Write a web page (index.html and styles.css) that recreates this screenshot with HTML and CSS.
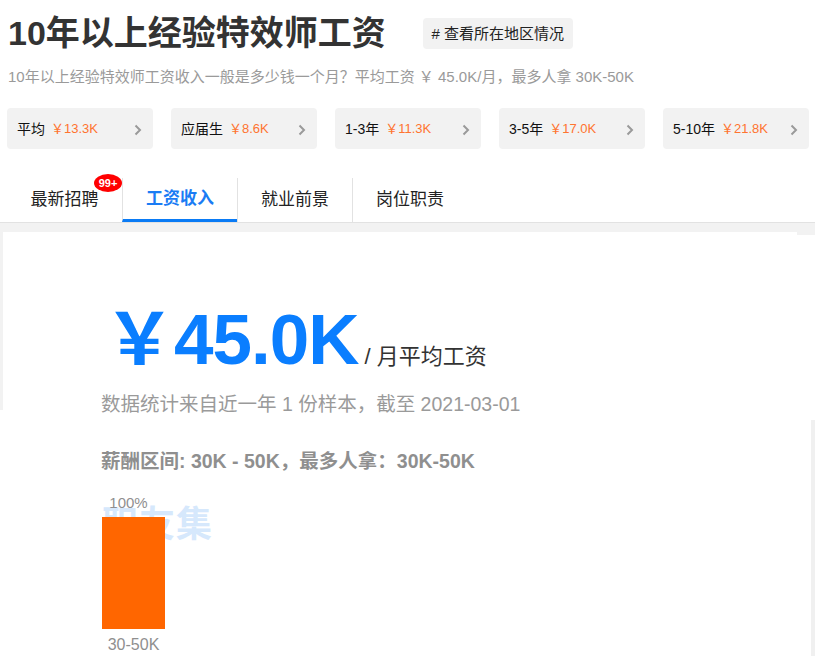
FILE: index.html
```html
<!DOCTYPE html>
<html lang="zh">
<head>
<meta charset="utf-8">
<title>10年以上经验特效师工资</title>
<link rel="stylesheet" href="styles.css">
</head>
<body>
<header class="head">
  <div class="title-row">
    <h1 class="title">10年以上经验特效师工资</h1>
    <a class="tag"># 查看所在地区情况</a>
  </div>
  <p class="subtitle">10年以上经验特效师工资收入一般是多少钱一个月？平均工资 ￥ 45.0K/月，最多人拿 30K-50K</p>
  <div class="cards">
    <div class="card"><span class="lbl">平均</span><span class="val">￥13.3K</span><svg class="chev" viewBox="0 0 8 12"><polyline points="1.5,1.5 6,6 1.5,10.5"/></svg></div>
    <div class="card"><span class="lbl">应届生</span><span class="val">￥8.6K</span><svg class="chev" viewBox="0 0 8 12"><polyline points="1.5,1.5 6,6 1.5,10.5"/></svg></div>
    <div class="card"><span class="lbl">1-3年</span><span class="val">￥11.3K</span><svg class="chev" viewBox="0 0 8 12"><polyline points="1.5,1.5 6,6 1.5,10.5"/></svg></div>
    <div class="card"><span class="lbl">3-5年</span><span class="val">￥17.0K</span><svg class="chev" viewBox="0 0 8 12"><polyline points="1.5,1.5 6,6 1.5,10.5"/></svg></div>
    <div class="card"><span class="lbl">5-10年</span><span class="val">￥21.8K</span><svg class="chev" viewBox="0 0 8 12"><polyline points="1.5,1.5 6,6 1.5,10.5"/></svg></div>
  </div>
</header>
<nav class="tabs">
  <div class="tab">最新招聘<span class="badge">99+</span></div>
  <div class="tab active">工资收入</div>
  <div class="tab">就业前景</div>
  <div class="tab">岗位职责</div>
</nav>
<main class="panel">
  <div class="band"></div>
  <section class="upper">
    <div class="big-line"><span class="big">￥45.0K</span><span class="unit">/ 月平均工资</span></div>
    <p class="stats">数据统计来自近一年 1 份样本，截至 2021-03-01</p>
  </section>
  <section class="lower">
    <p class="range">薪酬区间: 30K - 50K，最多人拿：30K-50K</p>
    <div class="chart">
      <span class="watermark">职友集</span>
      <div class="col">
        <span class="pct">100%</span>
        <div class="bar" style="height:112px"></div>
        <span class="xlbl">30-50K</span>
      </div>
    </div>
  </section>
</main>
</body>
</html>
```

FILE: styles.css
```css
* { box-sizing: border-box; }
html, body { margin: 0; padding: 0; background: #fff; }
body {
  font-family: "Liberation Sans", "Noto Sans CJK SC", sans-serif;
  color: #333;
  width: 815px;
  height: 656px;
  overflow: hidden;
}
.head { padding: 13px 0 0 8px; }
.title-row { display: flex; align-items: center; height: 40px; }
.title {
  margin: 0;
  font-size: 34px;
  line-height: 40px;
  font-weight: bold;
  color: #333;
}
.tag {
  margin-left: 37px;
  margin-top: 1px;
  height: 31px;
  width: 150px;
  background: #f2f2f2;
  border-radius: 4px;
  font-size: 15px;
  line-height: 31px;
  color: #222;
  text-align: center;
}
.subtitle {
  margin: 15px 0 0;
  font-size: 15px;
  line-height: 18px;
  color: #9a9a9a;
  white-space: nowrap;
}
.cards {
  display: flex;
  gap: 18px;
  margin: 22px 0 0 -1px;
}
.card {
  width: 146px;
  height: 41px;
  background: #f2f2f2;
  border-radius: 4px;
  display: flex;
  align-items: center;
  padding: 0 11px 0 10px;
}
.lbl { font-size: 14px; color: #111; margin-top: -2px; }
.val { font-size: 13px; color: #ff7430; margin-left: 6px; margin-top: -2px; }
.chev {
  margin-left: auto;
  width: 8px;
  height: 12px;
  margin-top: 2px;
}
.chev polyline { fill: none; stroke: #9a9a9a; stroke-width: 2; }

.tabs {
  display: flex;
  margin-top: 29px;
  padding-left: 7px;
  height: 45px;
  border-bottom: 1px solid #e2e2e2;
}
.tab {
  position: relative;
  width: 115px;
  height: 44px;
  font-size: 17px;
  line-height: 44px;
  text-align: center;
  color: #222;
  border-left: 1px solid #e2e2e2;
}
.tab:first-child { border-left: none; }
.tab.active {
  color: #1a7cf4;
  font-weight: bold;
  border-bottom: 3px solid #0a7bf5;
  line-height: 42px;
}
.badge {
  position: absolute;
  left: 87px;
  top: -4px;
  width: 28px;
  height: 18px;
  border-radius: 50%;
  background: #f00;
  color: #fff;
  font-size: 11px;
  font-weight: bold;
  line-height: 18px;
  text-align: center;
}
.panel { background: #fff; }
.band { height: 9px; background: #f2f2f2; }
.upper {
  position: relative;
  z-index: 1;
  width: 815px;
  background: #fff;
  border-left: 3px solid #f2f2f2;
  padding: 72px 0 0 98px;
  height: 178px;
}
.upper::before {
  content: "";
  position: absolute;
  right: 0;
  top: 0;
  width: 18px;
  height: 3px;
  background: #f2f2f2;
}
.big-line { display: flex; align-items: baseline; height: 72px; }
.big {
  font-size: 71px;
  line-height: 72px;
  font-weight: bold;
  color: #0a7eff;
  letter-spacing: -1px;
  margin-left: 3px;
}
.unit { font-size: 22px; color: #333; margin-left: 6px; }
.stats {
  margin: 16px 0 0;
  font-size: 19.5px;
  line-height: 24px;
  color: #9a9a9a;
  white-space: nowrap;
}
.lower {
  position: relative;
  background: #fff;
  height: 246px;
  padding: 39px 0 0 101px;
}
.lower::after {
  content: "";
  position: absolute;
  right: 0;
  top: 10px;
  bottom: 0;
  width: 4px;
  background: #f0f0f0;
}
.range {
  margin: 0;
  font-size: 19.5px;
  line-height: 24px;
  font-weight: bold;
  color: #8f8f8f;
  white-space: nowrap;
}
.chart {
  position: relative;
  margin-top: 21px;
  margin-left: 1px;
}
.watermark {
  position: absolute;
  left: 0;
  top: 12px;
  font-size: 36px;
  line-height: 38px;
  font-weight: bold;
  color: #d6e8fc;
  letter-spacing: 1px;
}
.col {
  position: relative;
  width: 63px;
  display: flex;
  flex-direction: column;
  align-items: center;
}
.pct { font-size: 15px; line-height: 18px; color: #8f8f8f; margin-bottom: 5px; margin-right: 10px; }
.bar { width: 63px; background: #ff6600; }
.xlbl { font-size: 16px; line-height: 18px; color: #8f8f8f; margin-top: 7px; }
```
